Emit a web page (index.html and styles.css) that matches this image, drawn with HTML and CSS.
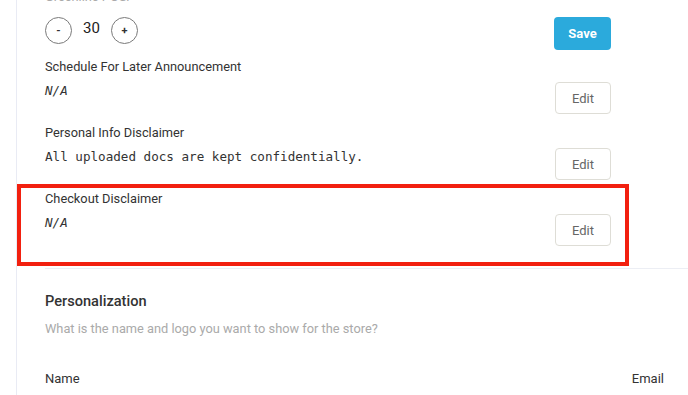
FILE: index.html
```html
<!DOCTYPE html>
<html lang="en">
<head>
    <meta charset="UTF-8">
    <meta name="viewport" content="width=device-width, initial-scale=1.0">
    <title>Store Settings</title>
    <link rel="stylesheet" href="styles.css">
</head>
<body>

    <div class="panel">
        <div class="settings">
            <p class="field-label muted">Greenline POS:</p>
            <div class="counter-row">
                <div class="counter">
                    <button class="circle">-</button>
                    <span class="count">30</span>
                    <button class="circle">+</button>
                </div>
                <button class="btn btn-save">Save</button>
            </div>

            <div class="setting">
                <p class="field-label">Schedule For Later Announcement</p>
                <div class="setting-body">
                    <code class="value empty">N/A</code>
                    <button class="btn btn-edit">Edit</button>
                </div>
            </div>

            <div class="setting">
                <p class="field-label">Personal Info Disclaimer</p>
                <div class="setting-body">
                    <code class="value">All uploaded docs are kept confidentially.</code>
                    <button class="btn btn-edit">Edit</button>
                </div>
            </div>

            <div class="setting highlighted">
                <p class="field-label">Checkout Disclaimer</p>
                <div class="setting-body">
                    <code class="value empty">N/A</code>
                    <button class="btn btn-edit">Edit</button>
                </div>
                <div class="highlight-box"></div>
            </div>
        </div>

        <div class="divider"></div>

        <div class="personal">
            <h2 class="section-title">Personalization</h2>
            <p class="section-desc">What is the name and logo you want to show for the store?</p>
            <div class="table-head">
                <span>Name</span>
                <span>Email</span>
            </div>
        </div>
    </div>

</body>
</html>
```

FILE: styles.css
```css
body{
    margin: 0;
    background-color: #fff;
    font-family: Roboto, "Liberation Sans", sans-serif;
    color: #333;
    overflow: hidden;
}
p{
    margin: 0;
}
.panel{
    margin-left: 16px;
    margin-top: -12px;
    padding-left: 28px;
    border-left: 1px solid #e9ebf4;
    min-height: 440px;
}
.settings{
    padding-right: 77px;
}
.field-label{
    font-size: 12.8px;
    line-height: 18px;
    color: #333;
}
.muted{
    color: #aaa;
}
.counter-row{
    display: flex;
    justify-content: space-between;
    margin-top: 11px;
    margin-bottom: 8px;
}
.counter{
    display: flex;
    align-items: flex-start;
}
.circle{
    width: 27px;
    height: 27px;
    border-radius: 50%;
    border: 1.5px solid #7a7a7a;
    background-color: #fff;
    color: #333;
    font-family: Roboto, sans-serif;
    font-size: 11px;
    font-weight: bold;
    padding: 0;
    line-height: 23px;
}
.count{
    font-size: 15px;
    line-height: 18px;
    padding-top: 2px;
    margin: 0 11px;
    color: #222;
}
.btn{
    font-family: Roboto, sans-serif;
    font-size: 13px;
    border-radius: 4px;
    cursor: pointer;
}
.btn-save{
    width: 57px;
    height: 33px;
    background-color: #2baadc;
    border: none;
    color: #fff;
    font-weight: bold;
}
.setting{
    position: relative;
    margin-bottom: 10px;
}
.setting-body{
    display: flex;
    justify-content: space-between;
    align-items: flex-start;
    margin-top: 6px;
}
.value{
    font-family: "DejaVu Sans Mono", monospace;
    font-size: 12.6px;
    line-height: 18px;
    color: #333;
}
.empty{
    font-style: italic;
}
.btn-edit{
    width: 56px;
    height: 32px;
    background-color: #fff;
    border: 1px solid #deddd6;
    color: #666;
}
.highlight-box{
    position: absolute;
    top: -6px;
    bottom: -20px;
    left: -28px;
    right: -18px;
    border: 4px solid #f2200f;
}
.divider{
    border-top: 1px solid #eceef4;
    margin-top: 22px;
}
.personal{
    padding-right: 24px;
}
.section-title{
    font-size: 14.6px;
    font-weight: 500;
    line-height: 20px;
    margin: 22px 0 0;
    color: #333;
}
.section-desc{
    font-size: 12.8px;
    line-height: 18px;
    color: #aaa;
    margin-top: 9px;
}
.table-head{
    display: flex;
    justify-content: space-between;
    font-size: 13px;
    line-height: 18px;
    margin-top: 32px;
    color: #333;
}
```
